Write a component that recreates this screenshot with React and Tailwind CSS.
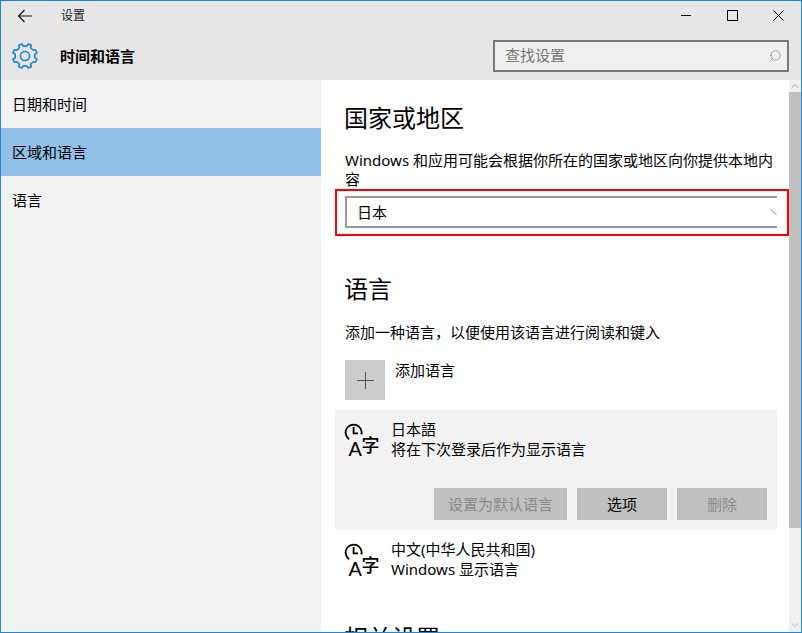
import React from 'react';
import { Search, ChevronUp, ChevronDown } from 'lucide-react';

const font = { fontFamily: '"Noto Sans", "Noto Sans CJK SC", sans-serif' };

// 8 tooth gear outline
const gearPath = () => {
  const pts = [];
  for (let i = 0; i < 8; i++) {
    const a = (i * Math.PI) / 4 + Math.PI / 8;
    const s = 0.2;
    const t = 0.14;
    [[9.2, -s - 0.02], [11.4, -t], [11.4, t], [9.2, s + 0.02]].forEach(([r, d]) => {
      pts.push(`${(12 + r * Math.cos(a + d)).toFixed(2)} ${(12 + r * Math.sin(a + d)).toFixed(2)}`);
    });
  }
  return `M${pts.join('L')}Z`;
};

const Gear = () => (
  <svg width="26" height="26" viewBox="0 0 24 24" fill="none" stroke="#1a86d6" strokeWidth="1.5">
    <path d={gearPath()} strokeLinejoin="round" />
    <circle cx="12" cy="12" r="4.2" />
  </svg>
);

const LangIcon = () => (
  <svg width="36" height="40" viewBox="0 0 36 40" fill="none" stroke="#000" className="shrink-0">
    <path d="M5.2 20.2 A8 8 0 1 1 17.4 15.5" strokeWidth="1.8" />
    <path d="M9.6 8 V14.3 H14" strokeWidth="1.8" />
    <text x="4.5" y="37" fontSize="20" fill="#000" stroke="none" fontFamily="Liberation Sans">A</text>
    <text x="17.5" y="32.5" fontSize="18" fontWeight="500" fill="#000" stroke="none" fontFamily="Noto Sans CJK SC">字</text>
  </svg>
);

const SideItem = ({ label, active }) => (
  <div className={`h-12 pl-[11px] flex items-center text-[15px] text-black ${active ? 'bg-[#91c1e8]' : ''}`}>
    {label}
  </div>
);

const App = () => {
  return (
    <div
      className="w-[802px] h-[633px] border border-[#2088d8] bg-white flex flex-col overflow-hidden"
      style={font}
    >
      {/* title bar + page header */}
      <div className="h-[79px] shrink-0 bg-[#e6e6e6] flex flex-col">
        <div className="h-[29px] flex items-center">
          <div className="w-[60px] pl-[16px]">
            <svg width="16" height="14" viewBox="0 0 16 14" fill="none" stroke="#111" strokeWidth="1.2">
              <path d="M15 7 H1.5 M7.5 1 L1.5 7 L7.5 13" />
            </svg>
          </div>
          <span className="text-[12px] text-[#222]">设置</span>
          <div className="ml-auto flex items-center">
            <div className="w-[46px] flex justify-center">
              <svg width="11" height="11" viewBox="0 0 11 11" stroke="#000" fill="none"><path d="M0 5.5 H10" /></svg>
            </div>
            <div className="w-[46px] flex justify-center">
              <svg width="11" height="11" viewBox="0 0 11 11" stroke="#000" fill="none"><rect x="0.5" y="0.5" width="10" height="10" /></svg>
            </div>
            <div className="w-[46px] flex justify-center">
              <svg width="11" height="11" viewBox="0 0 11 11" stroke="#000" fill="none"><path d="M0.5 0.5 L10.5 10.5 M10.5 0.5 L0.5 10.5" /></svg>
            </div>
          </div>
        </div>
        <div className="flex-1 flex items-start">
          <div className="w-[59px] pl-[11px] pt-[13px]">
            <Gear />
          </div>
          <span className="text-[15px] font-bold text-black leading-[20px] mt-[16px]">时间和语言</span>
          <div className="ml-auto mr-[12px] mt-[10px] w-[296px] h-[32px] border-2 border-[#7a7a7a] bg-[#f0f0f0] flex items-center pl-[10px] pr-[5px]">
            <span className="text-[15px] text-[#777] -mt-[1px]">查找设置</span>
            <Search size={14} strokeWidth={1.1} color="#777" className="ml-auto -scale-x-100" />
          </div>
        </div>
      </div>

      <div className="flex-1 flex min-h-0">
        {/* sidebar */}
        <div className="w-[320px] shrink-0 bg-[#f2f2f2]">
          <SideItem label="日期和时间" />
          <SideItem label="区域和语言" active />
          <SideItem label="语言" />
        </div>

        {/* content */}
        <div className="w-[468px] shrink-0 overflow-hidden text-black">
          <h2 className="ml-[23px] mt-[21px] text-[24px] leading-[34px] font-normal">国家或地区</h2>
          <p className="ml-[24px] w-[434px] mt-[16px] h-[38px] text-[15px] leading-[19px]">
            Windows 和应用可能会根据你所在的国家或地区向你提供本地内容
          </p>
          <div className="ml-[14px] w-[454px] h-[47px] border-2 border-[#ff0000] pt-[5px] pl-[8px]">
            <div className="w-[432px] h-[32px] border-2 border-r-0 border-[#999] flex items-center pl-[10px] overflow-hidden">
              <span className="text-[15px]">日本</span>
              <svg width="7" height="6" viewBox="0 0 7 6" fill="none" stroke="#888" className="ml-auto">
                <path d="M0.5 0.5 L6.5 5.5" />
              </svg>
            </div>
          </div>

          <h2 className="ml-[23px] mt-[36px] text-[24px] leading-[34px] font-normal">语言</h2>
          <p className="ml-[24px] mt-[16px] text-[15px] leading-[20px]">添加一种语言，以便使用该语言进行阅读和键入</p>

          <div className="ml-[24px] mt-[18px] flex items-start">
            <div className="w-10 h-10 bg-[#cccccc] flex items-center justify-center">
              <svg width="17" height="17" viewBox="0 0 17 17" stroke="#555" fill="none"><path d="M8.5 0 V17 M0 8.5 H17" /></svg>
            </div>
            <span className="ml-[10px] text-[15px] leading-[20px]">添加语言</span>
          </div>

          <div className="ml-[14px] w-[442px] h-[120px] mt-[10px] bg-[#f2f2f2] flex flex-col">
            <div className="flex pl-[9px] pt-[9px]">
              <LangIcon />
              <div className="ml-[11px] text-[15px] leading-[20px]">
                <div>日本語</div>
                <div>将在下次登录后作为显示语言</div>
              </div>
            </div>
            <div className="mt-auto mb-[10px] mr-[10px] flex justify-end gap-[10px] text-[15px]">
              <button className="w-[133px] h-[32px] bg-[#c0c0c0] text-[#8a8a8a]">设置为默认语言</button>
              <button className="w-[90px] h-[32px] bg-[#c0c0c0] text-black">选项</button>
              <button className="w-[90px] h-[32px] bg-[#c0c0c0] text-[#8a8a8a]">删除</button>
            </div>
          </div>

          <div className="ml-[23px] mt-[9px] flex">
            <LangIcon />
            <div className="ml-[11px] text-[15px] leading-[20px]">
              <div>中文(中华人民共和国)</div>
              <div>Windows 显示语言</div>
            </div>
          </div>

          <h2 className="ml-[23px] mt-[42px] text-[24px] leading-[34px] font-normal">相关设置</h2>
        </div>

        {/* scrollbar */}
        <div className="w-[12px] shrink-0 bg-[#f0f0f0] flex flex-col items-center">
          <ChevronUp size={12} strokeWidth={1.5} color="#888" />
          <div className="w-full h-[436px] bg-[#c0c0c0]" />
          <ChevronDown size={12} strokeWidth={1} color="#888" className="mt-auto mb-[1px]" />
        </div>
      </div>
    </div>
  );
};

export default App;
